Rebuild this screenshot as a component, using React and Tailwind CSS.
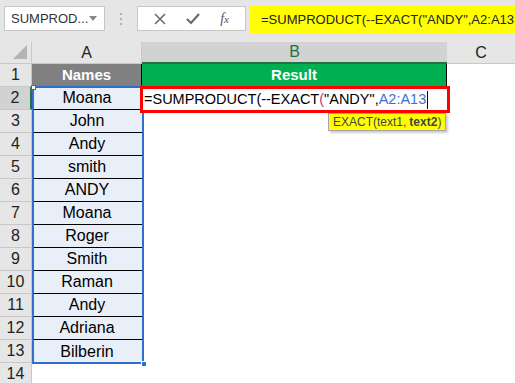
import { useState } from 'react';

const names = ['Moana', 'John', 'Andy', 'smith', 'ANDY', 'Moana', 'Roger', 'Smith', 'Raman', 'Andy', 'Adriana', 'Bilberin'];

function RowNum({ n, active }) {
  return (
    <div
      className={`h-[23px] flex items-center justify-center text-[16px] text-[#222] border-b border-[#c8c8c8] ${
        active ? 'bg-[#d2d2d2] border-r-2 border-r-[#217346]' : 'bg-[#e6e6e6] border-r border-r-[#c8c8c8]'
      }`}
    >
      {n}
    </div>
  );
}

function App() {
  const [editing] = useState(true);

  return (
    <div className="w-[515px] h-[383px] overflow-hidden bg-white relative" style={{ fontFamily: '"Liberation Sans", Arial, sans-serif' }}>
      {/* Formula bar */}
      <div className="h-[42px] bg-[#e6e6e6] flex items-start pt-[6px]">
        <div className="ml-[4px] w-[101px] h-[25px] bg-white border border-[#c6c6c6] flex items-center pl-[6px] pr-[7px] justify-between">
          <span className="text-[13px] text-[#333]">SUMPROD...</span>
          <svg width="8" height="5" viewBox="0 0 8 5"><path d="M0 0h8L4 5z" fill="#888" /></svg>
        </div>
        <div className="w-[32px] h-[25px] flex flex-col items-center justify-center gap-[3px]">
          <div className="w-[2px] h-[2px] bg-[#b0b0b0]" />
          <div className="w-[2px] h-[2px] bg-[#b0b0b0]" />
          <div className="w-[2px] h-[2px] bg-[#b0b0b0]" />
        </div>
        <div className="w-[109px] h-[25px] bg-white border border-[#c6c6c6] flex items-center justify-around px-[6px]">
          <svg width="12" height="12" viewBox="0 0 12 12"><path d="M1 1l10 10M11 1L1 11" stroke="#6b6b6b" strokeWidth="1.6" /></svg>
          <svg width="14" height="12" viewBox="0 0 14 12"><path d="M1 6l4 4 8-9" stroke="#6b6b6b" strokeWidth="2.2" fill="none" /></svg>
          <span className="text-[14px] italic text-[#555]" style={{ fontFamily: '"Liberation Serif", serif' }}>f<span className="text-[11px]">x</span></span>
        </div>
        <div className="ml-[3px] flex-1 h-[27px] bg-[#ffff00] flex items-center pl-[12px] text-[13px] text-[#222] whitespace-nowrap">
          =SUMPRODUCT(--EXACT("ANDY",A2:A13
        </div>
      </div>

      {/* Sheet */}
      <div className="relative grid grid-cols-[32px_110px_305px_68px]">
        {/* header row */}
        <div className="h-[22px] bg-[#e6e6e6] border-r border-b border-[#c8c8c8] relative">
          <svg className="absolute right-[4px] bottom-[4px]" width="14" height="14" viewBox="0 0 14 14"><path d="M14 0V14H0z" fill="#b4b4b4" /></svg>
        </div>
        <div className="h-[22px] bg-[#e6e6e6] border-r border-b border-[#c8c8c8] flex items-center justify-center text-[16px] text-[#222]">A</div>
        <div className="h-[22px] bg-[#d2d2d2] border-b-2 border-[#217346] flex items-center justify-center text-[16px] text-[#217346]">B</div>
        <div className="h-[22px] bg-[#e6e6e6] border-b border-[#c8c8c8] flex items-center justify-center text-[16px] text-[#222]">C</div>

        {/* row 1 */}
        <RowNum n={1} />
        <div className="h-[23px] bg-[#808080] border-r border-black flex items-center justify-center text-white font-bold text-[15px]">Names</div>
        <div className="h-[23px] bg-[#00b050] border-r border-black flex items-center justify-center text-white font-bold text-[15px]">Result</div>
        <div className="h-[23px]" />

        {names.map((name, i) => (
          <div key={i} className="contents">
            <RowNum n={i + 2} active={i === 0} />
            <div className={`h-[23px] bg-[#e9eff8] flex items-center justify-center text-[16px] text-black ${i < names.length - 1 ? 'border-b border-black' : ''}`}>
              {name}
            </div>
            <div className="h-[23px]" />
            <div className="h-[23px]" />
          </div>
        ))}

        <RowNum n={14} />
        <div className="h-[23px]" />
        <div className="h-[23px]" />
        <div className="h-[23px]" />

        {/* selection A2:A13 */}
        <div className="absolute left-[32px] top-[44px] w-[112px] h-[278px] border-2 border-[#2f6fcc] pointer-events-none">
          <div className="absolute -left-[3px] -top-[3px] w-[5px] h-[5px] bg-white border border-[#2f6fcc]" />
          <div className="absolute -right-[3px] -top-[3px] w-[5px] h-[5px] bg-white border border-[#2f6fcc]" />
          <div className="absolute -right-[5px] -bottom-[5px] w-[6px] h-[6px] bg-[#2f6fcc] border border-white" />
        </div>

        {/* editing cell B2 */}
        {editing && (
          <div className="absolute left-[140px] top-[44px] w-[310px] h-[27px] border-[3px] border-[#ff0000] bg-white flex items-center pl-[1px] text-[14.5px] text-black whitespace-nowrap">
            =SUMPRODUCT(--EXACT<span className="text-[#c0368c]">(</span>"ANDY",<span className="text-[#3c6fd0]">A2:A13</span>
            <span className="inline-block w-[1px] h-[18px] bg-black ml-[1px]" />
          </div>
        )}

        {/* tooltip */}
        <div className="absolute left-[328px] top-[71px] h-[18px] px-[4px] bg-[#ffff00] border border-[#a6a6a6] shadow-[2px_2px_2px_rgba(0,0,0,0.2)] flex items-center text-[12px] text-[#444] whitespace-nowrap">
          EXACT(text1, <span className="font-bold ml-[3px]">text2</span>)
        </div>
      </div>
    </div>
  );
}

export default App;
